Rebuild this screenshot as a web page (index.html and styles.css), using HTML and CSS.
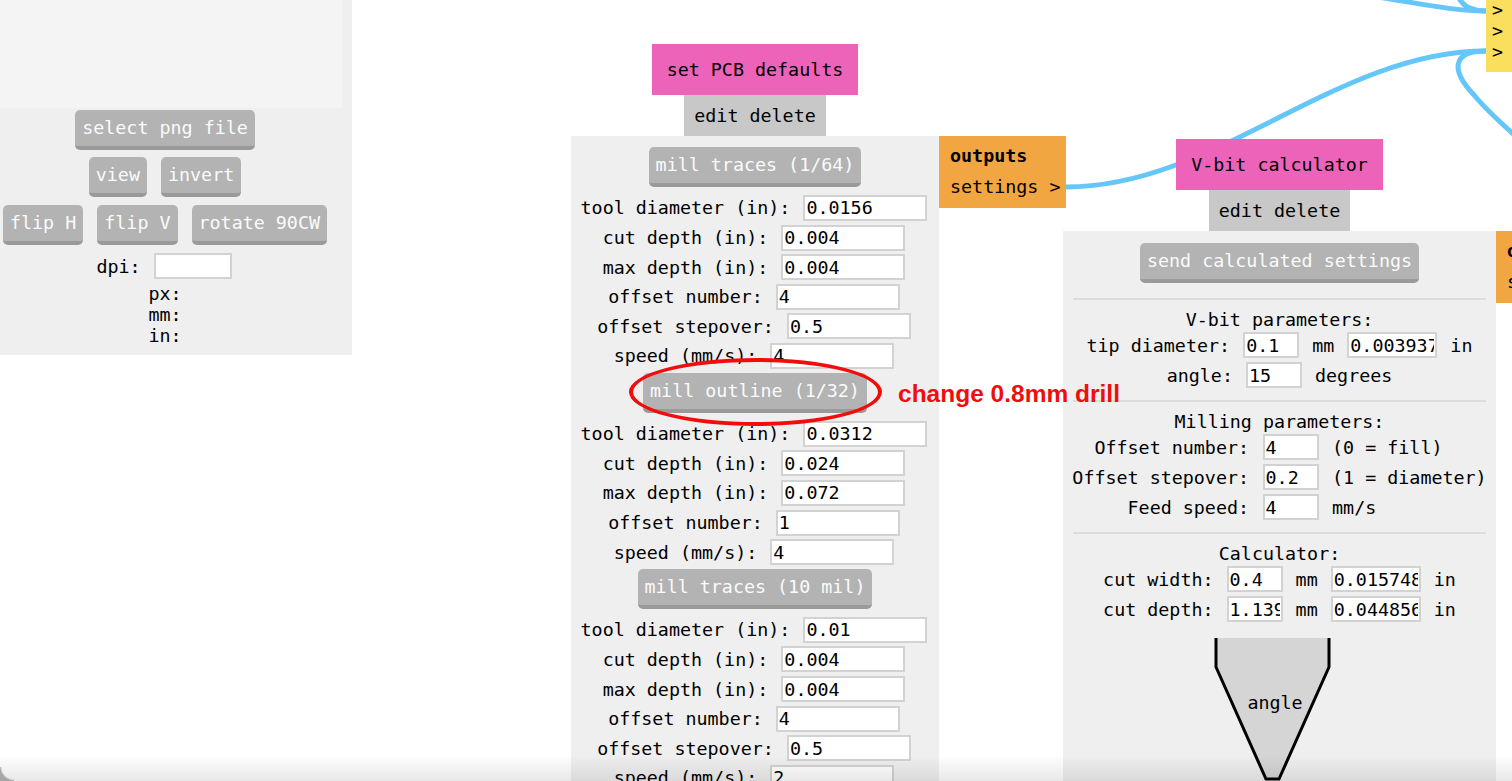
FILE: index.html
```html
<!DOCTYPE html>
<html>
<head>
<meta charset="utf-8">
<title>mods</title>
<link rel="stylesheet" href="styles.css">
</head>
<body>
<svg class="links" width="1512" height="781" viewBox="0 0 1512 781">
  <path d="M1066,187 C1216,187 1336,51 1486,51"/>
  <path d="M1486,51 C1450,51 1452,72 1474,95 C1488,112 1500,122 1520,140"/>
  <path d="M1370,-4 C1420,3 1450,11 1486,11"/>
  <path d="M1458,-4 C1462,6 1472,11 1486,11"/>
</svg>

<div class="module png">
  <div class="preview"></div>
  <div class="brow b1"><span class="btn">select png file</span></div>
  <div class="brow b2"><span class="btn">view</span><span class="btn">invert</span></div>
  <div class="brow b3"><span class="btn">flip H</span><span class="btn">flip V</span><span class="btn">rotate 90CW</span></div>
  <div class="row dpi"><span>dpi: </span><input class="f w78" value=""></div>
  <div class="info">px:<br>mm:<br>in:</div>
</div>

<div class="module mod-pcb">
  <div class="title">set PCB defaults</div>
  <div class="edit">edit delete</div>
  <div class="panel pcb-panel">
    <div class="btnrow"><span class="btn">mill traces (1/64)</span></div>
    <div class="row"><span>tool diameter (in): </span><input class="f" value="0.0156"></div>
    <div class="row"><span>cut depth (in): </span><input class="f" value="0.004"></div>
    <div class="row"><span>max depth (in): </span><input class="f" value="0.004"></div>
    <div class="row"><span>offset number: </span><input class="f" value="4"></div>
    <div class="row"><span>offset stepover: </span><input class="f" value="0.5"></div>
    <div class="row"><span>speed (mm/s): </span><input class="f" value="4"></div>
    <div class="btnrow"><span class="btn">mill outline (1/32)</span></div>
    <div class="row"><span>tool diameter (in): </span><input class="f" value="0.0312"></div>
    <div class="row"><span>cut depth (in): </span><input class="f" value="0.024"></div>
    <div class="row"><span>max depth (in): </span><input class="f" value="0.072"></div>
    <div class="row"><span>offset number: </span><input class="f" value="1"></div>
    <div class="row"><span>speed (mm/s): </span><input class="f" value="4"></div>
    <div class="btnrow"><span class="btn">mill traces (10 mil)</span></div>
    <div class="row"><span>tool diameter (in): </span><input class="f" value="0.01"></div>
    <div class="row"><span>cut depth (in): </span><input class="f" value="0.004"></div>
    <div class="row"><span>max depth (in): </span><input class="f" value="0.004"></div>
    <div class="row"><span>offset number: </span><input class="f" value="4"></div>
    <div class="row"><span>offset stepover: </span><input class="f" value="0.5"></div>
    <div class="row"><span>speed (mm/s): </span><input class="f" value="2"></div>
  </div>
  <div class="outputs"><b>outputs</b><br>settings &gt;</div>
</div>

<div class="module mod-vbit">
  <div class="title">V-bit calculator</div>
  <div class="edit">edit delete</div>
  <div class="panel vpanel">
    <div class="btnrow"><span class="btn">send calculated settings</span></div>
    <div class="sep"></div>
    <div class="vsec">
      <div class="hdr">V-bit parameters:</div>
      <div class="row v"><span>tip diameter: </span><input class="f s" value="0.1"><span> mm </span><input class="f l" value="0.003937"><span> in</span></div>
      <div class="row v"><span>angle: </span><input class="f s" value="15"><span> degrees</span></div>
    </div>
    <div class="sep"></div>
    <div class="vsec">
      <div class="hdr">Milling parameters:</div>
      <div class="mgrid">
        <span class="ml">Offset number:</span><span class="mi"><input class="f s" value="4"></span><span class="mt">(0 = fill)</span>
        <span class="ml">Offset stepover:</span><span class="mi"><input class="f s" value="0.2"></span><span class="mt">(1 = diameter)</span>
        <span class="ml">Feed speed:</span><span class="mi"><input class="f s" value="4"></span><span class="mt">mm/s</span>
      </div>
    </div>
    <div class="sep"></div>
    <div class="vsec">
      <div class="hdr">Calculator:</div>
      <div class="row v"><span>cut width: </span><input class="f s" value="0.4"><span> mm </span><input class="f l" value="0.015748"><span> in</span></div>
      <div class="row v"><span>cut depth: </span><input class="f s" value="1.1394"><span> mm </span><input class="f l" value="0.0448568"><span> in</span></div>
    </div>
    <svg class="bit" width="413" height="150" viewBox="0 0 413 150">
      <polygon class="bit-fill" points="143,4 143,33 193,145 206,145 256,33 256,4"/>
      <polyline class="bit-line" points="143,4 143,33 193,145 206,145 256,33 256,4"/>
      <text x="202" y="75" text-anchor="middle">angle</text>
    </svg>
  </div>
  <div class="outputs"><b>outputs</b><br>settings &gt;</div>
</div>

<div class="inputs-y">&gt;<br>&gt;<br>&gt;</div>

<div class="note-ring"></div>
<div class="note-text">change 0.8mm drill</div>

<div class="shade"></div>
<div class="corner"></div>
</body>
</html>
```

FILE: styles.css
```css
* { box-sizing: border-box; }

html, body {
  margin: 0;
  padding: 0;
}

body {
  position: relative;
  width: 1512px;
  height: 781px;
  overflow: hidden;
  background: #ffffff;
  font-family: "DejaVu Sans Mono", monospace;
  font-size: 18.35px;
  color: #000;
}

.links {
  position: absolute;
  left: 0;
  top: 0;
}
.links path {
  fill: none;
  stroke: #64c6f9;
  stroke-width: 5;
}

.module {
  position: absolute;
}

/* generic pieces */
.btn {
  display: inline-block;
  height: 40px;
  line-height: 36px;
  padding: 0 7px;
  background: #b3b3b3;
  color: #fbfbfb;
  border-radius: 5px;
  border-bottom: 4px solid #9a9a9a;
  white-space: pre;
}

.row {
  display: flex;
  align-items: center;
  justify-content: center;
  height: 29.6px;
  white-space: pre;
}

input.f {
  width: 124px;
  height: 26px;
  margin: 0 2px;
  padding: 0 1px;
  border: 2px solid #d2d2d2;
  background: #fff;
  color: #000;
  font: inherit;
  outline: none;
}
input.s { width: 56px; }
input.l { width: 90px; }
input.w78 { width: 78px; }

/* left png module */
.png {
  left: -22px;
  top: -10px;
  width: 374px;
  background: #efefef;
  padding: 0 10px 9.5px;
  display: flex;
  flex-direction: column;
  align-items: center;
}
.preview {
  align-self: stretch;
  height: 118px;
  background: #f4f4f4;
}
.brow {
  display: flex;
  gap: 14px;
}
.b1 { margin-top: 1.5px; }
.b2 { margin-top: 7.5px; }
.b3 { margin-top: 8px; }
.dpi {
  margin-top: 8px;
  height: 26px;
}
.info {
  margin-top: 3.5px;
  line-height: 21px;
  text-align: center;
}

/* node modules */
.mod-pcb {
  left: 571px;
  top: 44px;
  display: grid;
  grid-template-columns: 368px auto;
  align-items: start;
}
.mod-vbit {
  left: 1063px;
  top: 139px;
  display: grid;
  grid-template-columns: 433px auto;
  align-items: start;
}

.title {
  grid-column: 1;
  justify-self: center;
  background: #ed63b9;
  padding: 0 15px;
  line-height: 51px;
  white-space: pre;
}
.edit {
  grid-column: 1;
  justify-self: center;
  background: #c8c8c8;
  padding: 0 10px;
  line-height: 41px;
  white-space: pre;
}
.panel {
  grid-column: 1;
  grid-row: 3;
  background: #efefef;
  min-height: 660px;
}
.outputs {
  grid-column: 2;
  grid-row: 3;
  width: 127px;
  background: #f2a641;
  padding: 5px 5px 5px 11px;
  line-height: 30.8px;
  white-space: pre;
}
.outputs b { font-weight: bold; }

.pcb-panel {
  padding-top: 9px;
}
.btnrow {
  display: flex;
  justify-content: center;
  margin: 2px 0 6.2px;
}

/* v-bit panel */
.vpanel {
  padding: 10px 10px 0;
}
.vpanel .btnrow {
  margin: 2px 0 15px;
}
.sep {
  height: 2px;
  background: #dcdcdc;
}
.vsec {
  padding: 10px 0;
}
.hdr {
  line-height: 20px;
  text-align: center;
  white-space: pre;
}
.row.v {
  height: 30px;
}
.mgrid {
  display: grid;
  grid-template-columns: auto auto auto;
  column-gap: 11.5px;
  justify-content: center;
}
.ml, .mi, .mt {
  height: 30px;
  display: flex;
  align-items: center;
  white-space: pre;
}
.ml { justify-content: flex-end; }

.bit {
  display: block;
}
.bit-fill {
  fill: #d5d5d5;
  stroke: none;
}
.bit-line {
  fill: none;
  stroke: #000;
  stroke-width: 3;
}
.bit text {
  font-family: "DejaVu Sans Mono", monospace;
  font-size: 18.35px;
  fill: #000;
}

/* partially visible yellow inputs block */
.inputs-y {
  position: absolute;
  left: 1486px;
  top: -1px;
  width: 60px;
  background: #f9df5d;
  padding: 0 0 10px 6px;
  line-height: 21px;
}

/* red annotation */
.note-ring {
  position: absolute;
  left: 629px;
  top: 358px;
  width: 253px;
  height: 68px;
  border: 4px solid #f20d0d;
  border-radius: 50%;
}
.note-text {
  position: absolute;
  left: 898px;
  top: 379px;
  line-height: 30px;
  font-family: "Liberation Sans", Arial, sans-serif;
  font-weight: bold;
  font-size: 24.5px;
  color: #f20d0d;
  white-space: pre;
}

/* window bottom shading */
.shade {
  position: absolute;
  left: 0;
  bottom: 0;
  width: 1512px;
  height: 26px;
  background: linear-gradient(rgba(0, 0, 0, 0), rgba(0, 0, 0, 0.09));
  pointer-events: none;
}
.corner {
  position: absolute;
  left: 0;
  bottom: 0;
  width: 14px;
  height: 14px;
  background: radial-gradient(circle at 100% 0, rgba(0, 0, 0, 0) 12px, rgba(120, 120, 120, 0.6) 14px);
  pointer-events: none;
}
```
